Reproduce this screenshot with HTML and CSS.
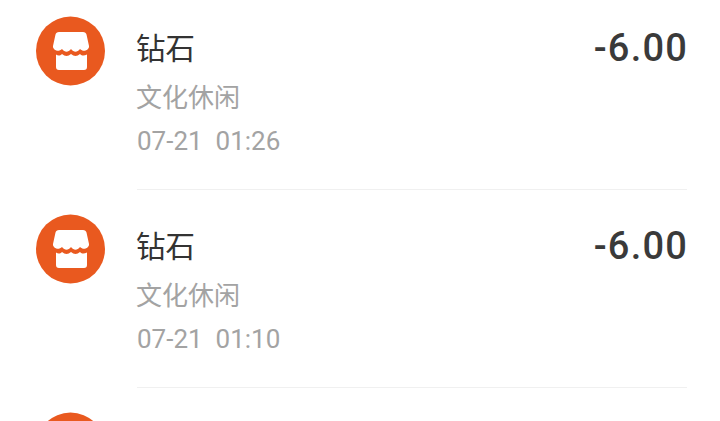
FILE: index.html
```html
<!DOCTYPE html>
<html lang="zh-CN">
<head>
  <meta charset="UTF-8" />
  <title>账单</title>
  <link rel="stylesheet" href="styles.css">
</head>
<body>
  <div class="list">
    <div class="row">
      <svg class="shop" viewBox="0 0 70 70">
        <circle cx="34.500" cy="35" r="34.500" fill="#e9591f"/>
        <path fill="#fff" d="M23 16H47C49 16 50 17 50.500 18.500L53 30C53.500 33.500 48 37 44 33C41 36.500 38 36.500 35 33C32 36.500 29 36.500 26 33C22 37 16.500 33.500 17 30L19.500 18.500C20 17 21 16 23 16Z"/>
        <path fill="#fff" d="M20 38.500C22 40 24 40 26 38C29 40.500 32 40.500 35 38C38 40.500 41 40.500 44 38C46 40 48 40 51 38.500V51C51 53 50 54 48 54H23C21 54 20 53 20 51Z"/>
      </svg>
      <div class="body">
        <div class="top">
          <span class="name">钻石</span>
          <span class="amount">-6.00</span>
        </div>
        <div class="sub">文化休闲</div>
        <div class="time">07-21&nbsp;&nbsp;01:26</div>
      </div>
    </div>
    <div class="row">
      <svg class="shop" viewBox="0 0 70 70">
        <circle cx="34.500" cy="35" r="34.500" fill="#e9591f"/>
        <path fill="#fff" d="M23 16H47C49 16 50 17 50.500 18.500L53 30C53.500 33.500 48 37 44 33C41 36.500 38 36.500 35 33C32 36.500 29 36.500 26 33C22 37 16.500 33.500 17 30L19.500 18.500C20 17 21 16 23 16Z"/>
        <path fill="#fff" d="M20 38.500C22 40 24 40 26 38C29 40.500 32 40.500 35 38C38 40.500 41 40.500 44 38C46 40 48 40 51 38.500V51C51 53 50 54 48 54H23C21 54 20 53 20 51Z"/>
      </svg>
      <div class="body">
        <div class="top">
          <span class="name">钻石</span>
          <span class="amount">-6.00</span>
        </div>
        <div class="sub">文化休闲</div>
        <div class="time">07-21&nbsp;&nbsp;01:10</div>
      </div>
    </div>
    <div class="row">
      <svg class="shop" viewBox="0 0 70 70">
        <circle cx="34.500" cy="35" r="34.500" fill="#e9591f"/>
      </svg>
    </div>
  </div>
</body>
</html>
```
FILE: styles.css
```css
html, body { margin:0; padding:0; background:#fff; height:100%; overflow:hidden; }
body { font-family: Roboto, "Noto Sans CJK SC", sans-serif; }
.list { padding-top:16px; height:405px; overflow:hidden; }
.row { display:flex; padding-left:36px; height:198px; }
.shop { width:70px; height:70px; flex:none; }
.body { flex:1; margin-left:31px; margin-right:33px; height:173px; border-bottom:1px solid #f0f0f0; }
.top { display:flex; justify-content:space-between; align-items:center; height:44px; margin-top:8px; }
.name { font-size:29.500px; color:#333; font-family:"Noto Sans CJK SC", sans-serif; margin-left:-1px; }
.amount { font-size:38px; font-weight:500; color:#3a3a3a; letter-spacing:1.2px; margin-right:-1px; margin-top:3px; }
.sub { font-size:26px; color:#a3a3a3; line-height:40px; margin-top:8px; font-family:"Noto Sans CJK SC", sans-serif; margin-left:-1px; }
.time { font-size:26px; color:#a3a3a3; line-height:40px; margin-top:5px; }
```
